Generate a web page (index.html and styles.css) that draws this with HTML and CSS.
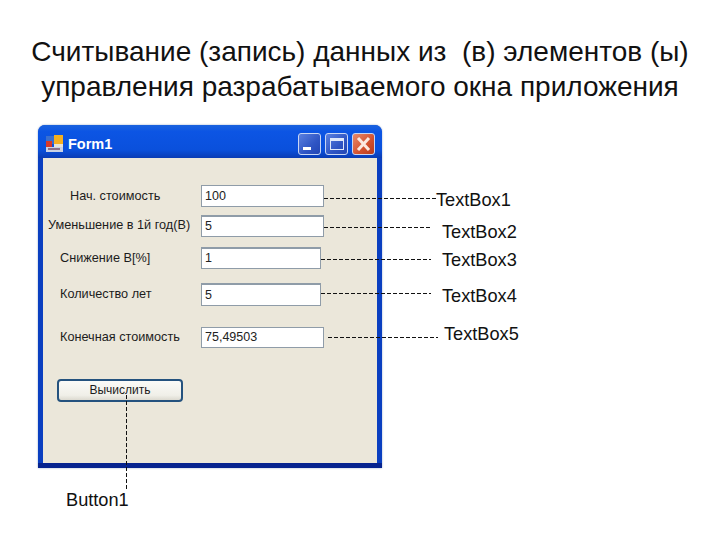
FILE: index.html
```html
<!DOCTYPE html>
<html lang="ru">
  <head>
    <meta charset="UTF-8" />
    <title>Считывание данных</title>
    <link rel="stylesheet" href="styles.css">
  </head>
  <body>
    <h1 class="slideTitle">
      <span>Считывание (запись) данных из &nbsp;(в) элементов (ы)</span>
      <span>управления разрабатываемого окна приложения</span>
    </h1>

    <div class="diagram">
      <div class="window">
        <div class="titlebar">
          <svg class="formIcon" width="17" height="18" viewBox="0 0 17 18">
            <rect x="0" y="1" width="8" height="8" fill="#3a6fd0" />
            <rect x="8" y="0" width="9" height="9" fill="#f5b021" />
            <rect x="0" y="6" width="6" height="6" fill="#d8392a" />
            <rect x="0" y="12" width="17" height="5" fill="#c9d2e4" />
            <rect x="8" y="9" width="9" height="3" fill="#e9e4d4" />
            <rect x="2" y="13" width="12" height="2" fill="#8f6f86" />
          </svg>
          <span class="formName">Form1</span>
          <div class="winButtons">
            <div class="winBtn">
              <svg width="23" height="22" viewBox="0 0 23 22"><rect x="5" y="14" width="8" height="3" fill="#fff" /></svg>
            </div>
            <div class="winBtn">
              <svg width="24" height="22" viewBox="0 0 24 22"><rect x="5.5" y="5.5" width="13" height="11" fill="none" stroke="#dfe8fa" /><rect x="5" y="5" width="14" height="3" fill="#dfe8fa" /></svg>
            </div>
            <div class="winBtn closeBtn">
              <svg width="23" height="22" viewBox="0 0 23 22"><path d="M6 5 L17 17 M17 5 L6 17" stroke="#fbe8e0" stroke-width="3" /></svg>
            </div>
          </div>
        </div>

        <div class="client">
          <span class="label lblStart">Нач. стоимость</span>
          <span class="label lblDecrease">Уменьшение в 1й год(В)</span>
          <span class="label lblDrop">Снижение В[%]</span>
          <span class="label lblYears">Количество лет</span>
          <span class="label lblEnd">Конечная стоимость</span>

          <div class="textbox box1">100</div>
          <div class="textbox box2">5</div>
          <div class="textbox box3">1</div>
          <div class="textbox box4">5</div>
          <div class="textbox box5">75,49503</div>

          <div class="calcButton">Вычислить</div>
        </div>
      </div>

      <svg class="leaders" width="720" height="420" viewBox="0 0 720 420">
        <path d="M324 78.5 H436 M324 107.5 H431 M321 139.5 H431 M321 173.5 H431 M328 217.5 H438 M126.5 275 V370" />
      </svg>

      <span class="note note1">TextBox1</span>
      <span class="note note2">TextBox2</span>
      <span class="note note3">TextBox3</span>
      <span class="note note4">TextBox4</span>
      <span class="note note5">TextBox5</span>
      <span class="note noteButton">Button1</span>
    </div>
  </body>
</html>
```

FILE: styles.css
```css
* {
  margin: 0;
  padding: 0;
  box-sizing: border-box;
}

body {
  width: 720px;
  height: 540px;
  overflow: hidden;
  background-color: #fff;
  font-family: "Liberation Sans", Arial, sans-serif;
  color: #111;
}

/* ---------TITLE------------*/
.slideTitle {
  height: 120px;
  padding-top: 34px;
  font-size: 28px;
  font-weight: 400;
  line-height: 35px;
  text-align: center;
}

.slideTitle span {
  display: block;
}

/* ---------WINDOW------------*/
.diagram {
  position: relative;
  height: 420px;
  padding: 5px 0 0 38px;
}

.window {
  display: flex;
  flex-direction: column;
  width: 344px;
  height: 343px;
  border-radius: 7px 7px 0 0;
  background: linear-gradient(#0a3fc0 98.6%, #06238f 98.6%);
  box-shadow: 0 0 2px #8aa0c0;
}

.titlebar {
  display: flex;
  align-items: center;
  height: 33px;
  padding: 4px 7px 0 8px;
  border-radius: 7px 7px 0 0;
  background: linear-gradient(#1a62de, #0c55e4 20%, #0a50dc 75%, #0a3cb4);
}

.formIcon {
  flex: none;
}

.formName {
  margin-left: 5px;
  color: #fff;
  font-size: 14.5px;
  font-weight: 700;
}

.winButtons {
  display: flex;
  gap: 4px;
  margin-left: auto;
}

.winBtn {
  width: 23px;
  height: 22px;
  border: 1px solid #c8d6f4;
  border-radius: 3px;
  background: linear-gradient(135deg, #5a80e0, #2f55c4 60%, #2246b4);
}

.winBtn svg {
  display: block;
  margin: -1px;
}

.closeBtn {
  background: linear-gradient(135deg, #e88a6c, #d2502e 60%, #b83a1c);
}

.client {
  position: relative;
  height: 305px;
  margin: 0 5px;
  background-color: #ebe7da;
}

/* ---------FORM CONTROLS------------*/
.label {
  position: absolute;
  font-size: 12.7px;
  line-height: 16px;
  white-space: nowrap;
  color: #1c1c1c;
}

.lblStart {
  left: 27px;
  top: 30px;
}

.lblDecrease {
  left: 5px;
  top: 59px;
}

.lblDrop {
  left: 17px;
  top: 92px;
}

.lblYears {
  left: 17px;
  top: 128px;
}

.lblEnd {
  left: 17px;
  top: 171px;
}

.textbox {
  position: absolute;
  left: 158px;
  padding-left: 3px;
  border: 1px solid #8f9ca8;
  background-color: #fff;
  font-size: 12.5px;
  line-height: 20px;
  color: #222;
}

.box1 {
  top: 27px;
  width: 123px;
  height: 22px;
}

.box2 {
  top: 57px;
  width: 123px;
  height: 22px;
  border-top-width: 2px;
  line-height: 19px;
}

.box3 {
  top: 89px;
  width: 120px;
  height: 22px;
  border-top-width: 2px;
  line-height: 19px;
}

.box4 {
  top: 125px;
  width: 120px;
  height: 23px;
  border-top-width: 2px;
}

.box5 {
  top: 169px;
  width: 123px;
  height: 21px;
  line-height: 19px;
}

.calcButton {
  position: absolute;
  left: 14px;
  top: 221px;
  width: 126px;
  height: 23px;
  border: 2px solid #24527e;
  border-radius: 4px;
  background: linear-gradient(#fbfbf8, #f0efe8 75%, #dcdad0);
  font-size: 12px;
  line-height: 19px;
  text-align: center;
  color: #1c1c1c;
}

/* ---------ANNOTATIONS------------*/
.leaders {
  position: absolute;
  left: 0;
  top: 0;
}

.leaders path {
  fill: none;
  stroke: #111;
  stroke-width: 1;
  stroke-dasharray: 4 2;
}

.note {
  position: absolute;
  font-size: 18.2px;
  line-height: 20px;
  white-space: nowrap;
}

.note1 {
  left: 436px;
  top: 70px;
}

.note2 {
  left: 442px;
  top: 102px;
}

.note3 {
  left: 442px;
  top: 130px;
}

.note4 {
  left: 442px;
  top: 166px;
}

.note5 {
  left: 444px;
  top: 204px;
}

.noteButton {
  left: 66px;
  top: 370px;
}
```
